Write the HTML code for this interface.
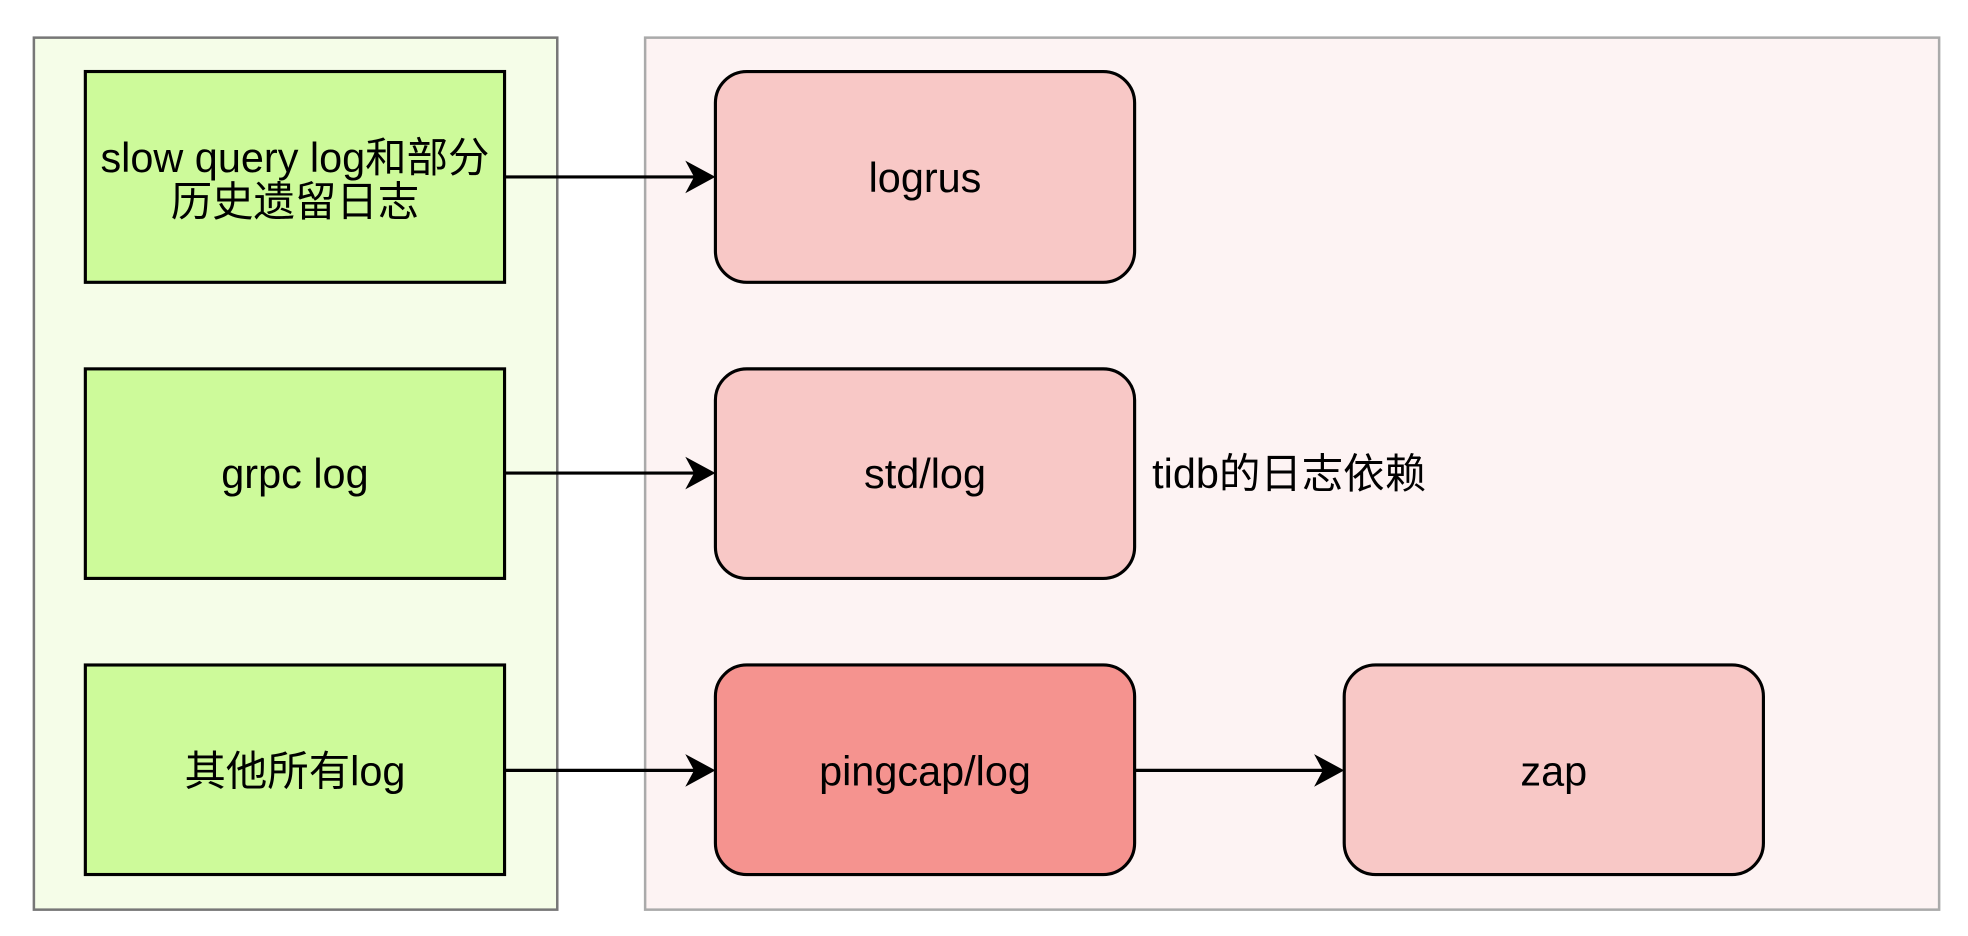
<!DOCTYPE html>
<html><head><meta charset="utf-8"><style>
html,body{margin:0;padding:0;background:#fff;width:1968px;height:936px;overflow:hidden}
svg{display:block}
text{font-family:"Liberation Sans","Noto Sans CJK SC",sans-serif;font-size:33px;fill:#000}
</style></head><body>
<svg width="1968" height="936" viewBox="0 0 1568 746" preserveAspectRatio="none">
<defs>
<path id="ah" d="M-24,-13 L0,0 L-24,13 L-17,0 Z" fill="#000"/></defs>
<rect x="27" y="30" width="417" height="695" fill="#f5fde8" stroke="#777" stroke-width="2"/>
<rect x="514" y="30" width="1031" height="695" fill="#fdf3f3" stroke="#aaa" stroke-width="2"/>
<g fill="#cdfa9a" stroke="#000" stroke-width="2.5">
<rect x="68" y="57" width="334" height="168"/>
<rect x="68" y="294" width="334" height="167"/>
<rect x="68" y="530" width="334" height="167"/>
</g>
<g stroke="#000" stroke-width="2.5">
<rect x="570" y="57" width="334" height="168" rx="25" fill="#f8c8c6"/>
<rect x="570" y="294" width="334" height="167" rx="25" fill="#f8c8c6"/>
<rect x="570" y="530" width="334" height="167" rx="25" fill="#f5938f"/>
<rect x="1071" y="530" width="334" height="167" rx="25" fill="#f8c8c6"/>
<line x1="402" y1="141" x2="555" y2="141"/>
<line x1="402" y1="377" x2="555" y2="377"/>
<line x1="402" y1="614" x2="555" y2="614"/>
<line x1="904" y1="614" x2="1056" y2="614"/>
</g>
<use href="#ah" x="570" y="141"/>
<use href="#ah" x="570" y="377"/>
<use href="#ah" x="570" y="614"/>
<use href="#ah" x="1071" y="614"/>
<g text-anchor="middle">
<text x="235" y="137">slow query log和部分</text>
<text x="235" y="172">历史遗留日志</text>
<text x="235" y="389">grpc log</text>
<text x="235" y="626">其他所有log</text>
<text x="737" y="153">logrus</text>
<text x="737" y="389">std/log</text>
<text x="737" y="626">pingcap/log</text>
<text x="1238" y="626">zap</text>
</g>
<text x="918" y="389">tidb的日志依赖</text>
</svg>
</body></html>
